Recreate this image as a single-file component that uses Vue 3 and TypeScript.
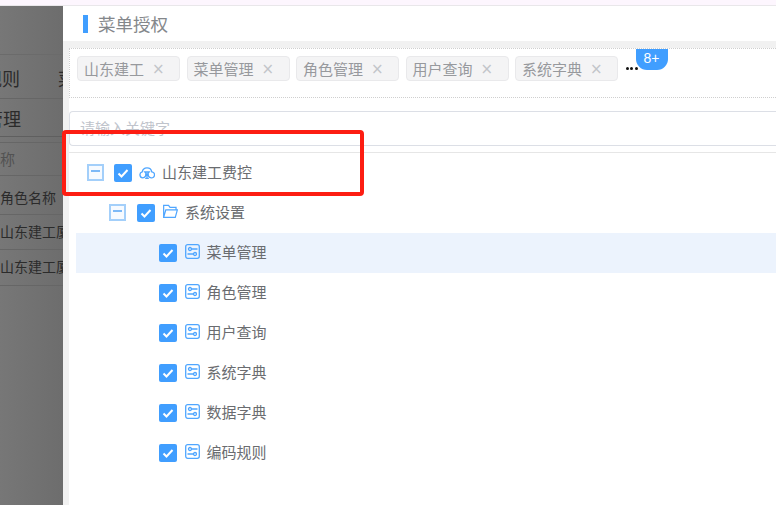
<script setup lang="ts">
const tags: string[] = ['山东建工', '菜单管理', '角色管理', '用户查询', '系统字典']
const leaves: { name: string; active?: boolean }[] = [
  { name: '菜单管理', active: true },
  { name: '角色管理' },
  { name: '用户查询' },
  { name: '系统字典' },
  { name: '数据字典' },
  { name: '编码规则' },
]
const backRows: { text: string; cls: string }[] = [
  { text: '角色名称', cls: 'r1' },
  { text: '山东建工厦', cls: 'r2' },
  { text: '山东建工厦', cls: 'r3' },
]
</script>

<template>
  <div class="page">
    <div class="topbar"></div>
    <div class="main">
      <aside class="back">
        <div class="back-top"></div>
        <div class="back-tabs"><span class="t1">规则</span><span class="t2">菜</span></div>
        <div class="back-title"><span>管理</span></div>
        <div class="back-gap"></div>
        <div class="back-head">称</div>
        <div v-for="r in backRows" :key="r.cls" class="back-row" :class="r.cls">{{ r.text }}</div>
      </aside>
      <section class="drawer">
        <header class="drawer-head"><i class="mark"></i><span>菜单授权</span></header>
        <div class="drawer-body">
          <div class="tags">
            <span v-for="t in tags" :key="t" class="tag">{{ t }}<em>×</em></span>
            <span class="more"><i></i><i></i><i></i><b class="badge">8+</b></span>
          </div>
          <div class="search"><span>请输入关键字</span></div>
          <div class="tree">
            <div class="row root">
              <span class="expander"></span>
              <span class="check"><svg viewBox="0 0 18 18"><path d="M4.500 9.500l3 3 6-6.500" /></svg></span>
              <svg class="ico cloud" viewBox="0 0 16 13"><path d="M3.800 11.800a3 3 0 0 1-.6-5.900 4.900 4.900 0 0 1 9.600-.1 3 3 0 0 1-.6 6M3.800 11.800a3 3 0 0 0 2.700-4.300M12.200 11.800a3 3 0 0 1-2.700-4.300M5.800 6h4.400L8 8.600zM8 8.600v3.900M6.200 12.500h3.600" /></svg>
              <span class="label">山东建工费控</span>
            </div>
            <div class="row folder">
              <span class="expander"></span>
              <span class="check"><svg viewBox="0 0 18 18"><path d="M4.500 9.500l3 3 6-6.500" /></svg></span>
              <svg class="ico" viewBox="0 0 16 15"><path d="M.7 13.800V1h5.200l1.600 2.200h6.400v2.600M.7 13.800h12.400l2.200-8H3z" /></svg>
              <span class="label">系统设置</span>
            </div>
            <div v-for="l in leaves" :key="l.name" class="row leaf" :class="{ active: l.active }">
              <span class="check"><svg viewBox="0 0 18 18"><path d="M4.500 9.500l3 3 6-6.500" /></svg></span>
              <svg class="ico" viewBox="0 0 15 15"><rect x=".7" y=".7" width="13.600" height="13.600" rx="2" /><circle cx="5" cy="5" r="1.500" /><circle cx="10" cy="10" r="1.500" /><path d="M6.500 5h6M2.500 10h6" /></svg>
              <span class="label">{{ l.name }}</span>
            </div>
          </div>
        </div>
      </section>
    </div>
    <div class="callout"></div>
  </div>
</template>

<style>
html, body { margin: 0; background: #fff; }
</style>

<style scoped>
.page {
  position: relative;
  width: 776px;
  height: 505px;
  overflow: hidden;
  display: flex;
  flex-direction: column;
  font-family: "Noto Sans CJK SC", "Liberation Sans", sans-serif;
}
.topbar { height: 5px; flex: none; background: #fdf6fe; border-bottom: 1px solid #e9e7ea; }
.main { flex: 1; display: flex; min-height: 0; }
.back {
  width: 63px;
  flex: none;
  background: linear-gradient(90deg, #777, #6d6d6d);
  color: #2b2b2b;
  overflow: hidden;
  white-space: nowrap;
  font-size: 14px;
}
.back-top { height: 48px; border-bottom: 1px solid #6b6b6b; }
.back-tabs {
  height: 43px;
  display: flex;
  font-size: 18px;
  line-height: 47px;
  border-bottom: 1px solid #666;
}
.t1 { margin-left: -16px; flex: none; width: 74px; }
.t2 { flex: none; }
.back-title { height: 37px; line-height: 39px; font-size: 18px; border-bottom: 1px solid #5f5f5f; }
.back-title span { display: block; margin-left: -15px; }
.back-gap { height: 5px; border-bottom: 1px solid #666; }
.back-head { height: 32px; line-height: 32px; color: #525252; border-bottom: 1px solid #666; font-size: 15px; }
.back-row { box-sizing: border-box; border-bottom: 1px solid #666; }
.r1 { height: 39px; line-height: 42px; }
.r2 { height: 35px; line-height: 33px; }
.r3 { height: 36px; line-height: 33px; }
.drawer { flex: 1; min-width: 0; display: flex; flex-direction: column; background: #fff; }
.drawer-head {
  height: 35px;
  flex: none;
  display: flex;
  align-items: center;
  padding-left: 20px;
  gap: 10px;
  font-size: 17.500px;
  color: #84878b;
}
.mark { width: 5px; height: 18px; background: #409eff; }
.drawer-body { flex: 1; background: #f1f1f1; padding: 7px 0 0 6px; min-height: 0; }
.tags {
  height: 50px;
  box-sizing: border-box;
  display: flex;
  align-items: flex-start;
  padding: 7px 0 0 7px;
  gap: 6.500px;
  background: #fff;
  border-top: 1px dotted #cfcfcf;
  border-bottom: 1px dotted #cfcfcf;
  border-left: 1px dotted #cfcfcf;
}
.tag {
  flex: none;
  width: 103px;
  height: 25px;
  box-sizing: border-box;
  padding-left: 6px;
  display: flex;
  align-items: center;
  font-size: 15px;
  color: #97999d;
  background: #f4f4f5;
  border: 1px solid #e9e9eb;
  border-radius: 4px;
}
.tag em { font-style: normal; font-size: 15px; margin-left: 8px; color: #c2c4c9; font-family: "DejaVu Sans", sans-serif; line-height: 18px; }
.more { position: relative; display: flex; gap: 1.500px; margin: 11px 0 0 1px; }
.more i { width: 3px; height: 3px; border-radius: 50%; background: #111; }
.badge {
  position: absolute;
  left: 10px;
  top: -18px;
  width: 32px;
  height: 21px;
  border-radius: 0 0 11px 11px;
  background: #409eff;
  color: #fff;
  font-size: 14px;
  font-weight: 400;
  text-align: center;
  line-height: 19px;
  font-family: "Liberation Sans", sans-serif;
}
.search {
  background: #fff;
  height: 55px;
  padding-top: 13px;
  box-sizing: border-box;
  border-bottom: 1px solid #e6e6e6;
}
.search span {
  display: block;
  height: 35px;
  box-sizing: border-box;
  border: 1px solid #dcdfe6;
  border-right: 0;
  border-radius: 4px 0 0 4px;
  padding-left: 10px;
  margin-right: -1px;
  font-size: 15px;
  line-height: 31px;
  color: #c0c4cc;
}
.tree { background: #fff; height: 352px; box-sizing: border-box; padding-left: 7px; }
.row { height: 40px; display: flex; align-items: center; color: #6a6c70; font-size: 15px; }
.root { padding-left: 11px; }
.folder { padding-left: 33px; }
.leaf { padding-left: 83px; }
.active { background: #ecf3fd; }
.expander {
  width: 17px;
  height: 17px;
  flex: none;
  box-sizing: border-box;
  border: 2px solid #a3cffa;
  background: #f6faff;
  position: relative;
  margin: -1px 10px 0 0;
}
.folder .expander { margin-right: 11px; }
.expander::after { content: ""; position: absolute; left: 2px; right: 2px; top: 4px; height: 2px; background: #7db9f7; }
.check {
  width: 18px;
  height: 18px;
  border-radius: 2px;
  background: #409eff;
  flex: none;
}
.check svg { display: block; width: 18px; height: 18px; fill: none; stroke: #fff; stroke-width: 2; }
.ico { width: 15px; height: 15px; margin: -3px 0 0 8px; flex: none; fill: none; stroke: #4fa6ff; stroke-width: 1.300; }
.cloud { width: 16px; height: 13px; margin: -2px 0 0 7px; }
.folder .ico { margin-left: 8px; margin-top: -3px; }
.label { margin: -4px 0 0 7px; }
.folder .label { margin-left: 7px; }
.leaf .label { margin-left: 6.500px; }
.callout {
  position: absolute;
  left: 62px;
  top: 130px;
  width: 302px;
  height: 66px;
  box-sizing: border-box;
  border: 4px solid #fd1d12;
  border-radius: 4px;
}
</style>
